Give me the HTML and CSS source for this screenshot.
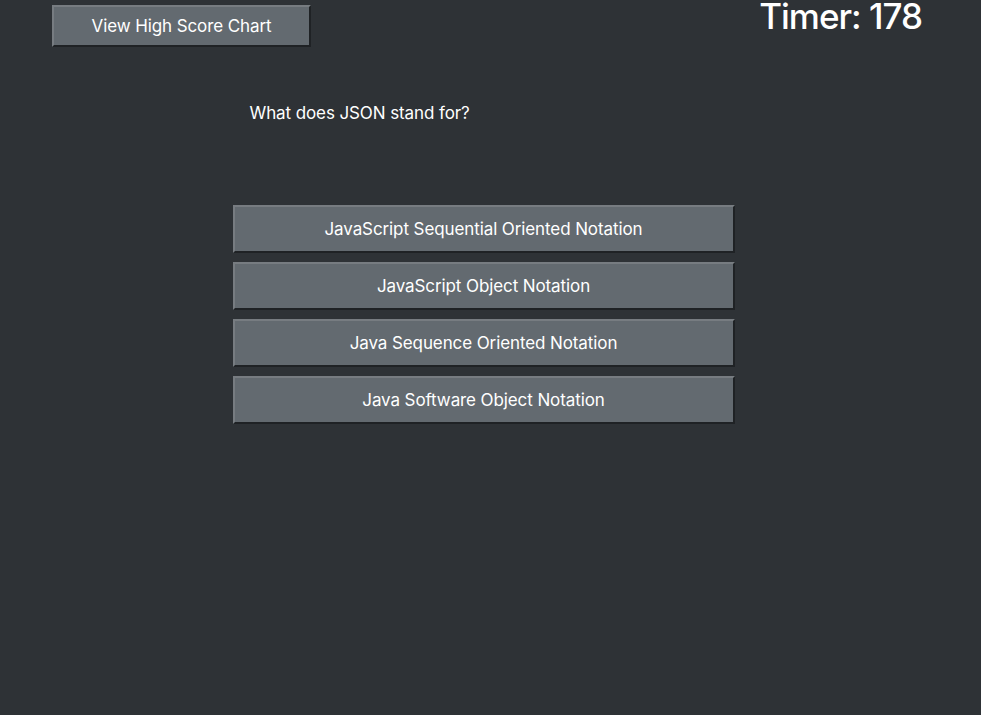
FILE: index.html
```html
<!DOCTYPE html>
<html>
<head>
<meta charset="utf-8">
<link rel="stylesheet" href="styles.css">
</head>
<body>
<header class="top">
  <button class="btn score-btn">View High Score Chart</button>
  <div class="timer">Timer: 178</div>
</header>
<main class="quiz">
  <p class="question">What does JSON stand for?</p>
  <div class="answers">
    <button class="btn answer">JavaScript Sequential Oriented Notation</button>
    <button class="btn answer">JavaScript Object Notation</button>
    <button class="btn answer">Java Sequence Oriented Notation</button>
    <button class="btn answer">Java Software Object Notation</button>
  </div>
</main>
</body>
</html>
```
FILE: styles.css
```css
html, body {
  margin: 0;
  padding: 0;
  background: #2e3236;
  color: #ffffff;
  font-family: Inter, "Noto Sans", sans-serif;
  height: 100%;
}
.top {
  display: flex;
  justify-content: space-between;
  align-items: flex-start;
  padding: 0 59px 0 52px;
}
.btn {
  background: #636a70;
  color: #ffffff;
  font-family: Inter, "Noto Sans", sans-serif;
  border: 2px solid;
  border-color: #777c81 #1f2225 #1f2225 #777c81;
  cursor: pointer;
}
.score-btn {
  margin-top: 5px;
  width: 259px;
  height: 42px;
  font-size: 17px;
  letter-spacing: -0.1px;
}
.timer {
  font-size: 35px;
  font-weight: 500;
  line-height: 33px;
  letter-spacing: -1px;
}
.quiz {
  width: 502px;
  margin: 0 auto;
  position: relative;
  left: -7px;
}
.question {
  margin: 54px 0 0 17px;
  font-size: 17px;
  line-height: 24px;
  letter-spacing: -0.1px;
}
.answers {
  display: flex;
  flex-direction: column;
  gap: 9px;
  margin-top: 80px;
}
.answer {
  width: 502px;
  height: 48px;
  font-size: 17px;
  letter-spacing: -0.1px;
}
```
